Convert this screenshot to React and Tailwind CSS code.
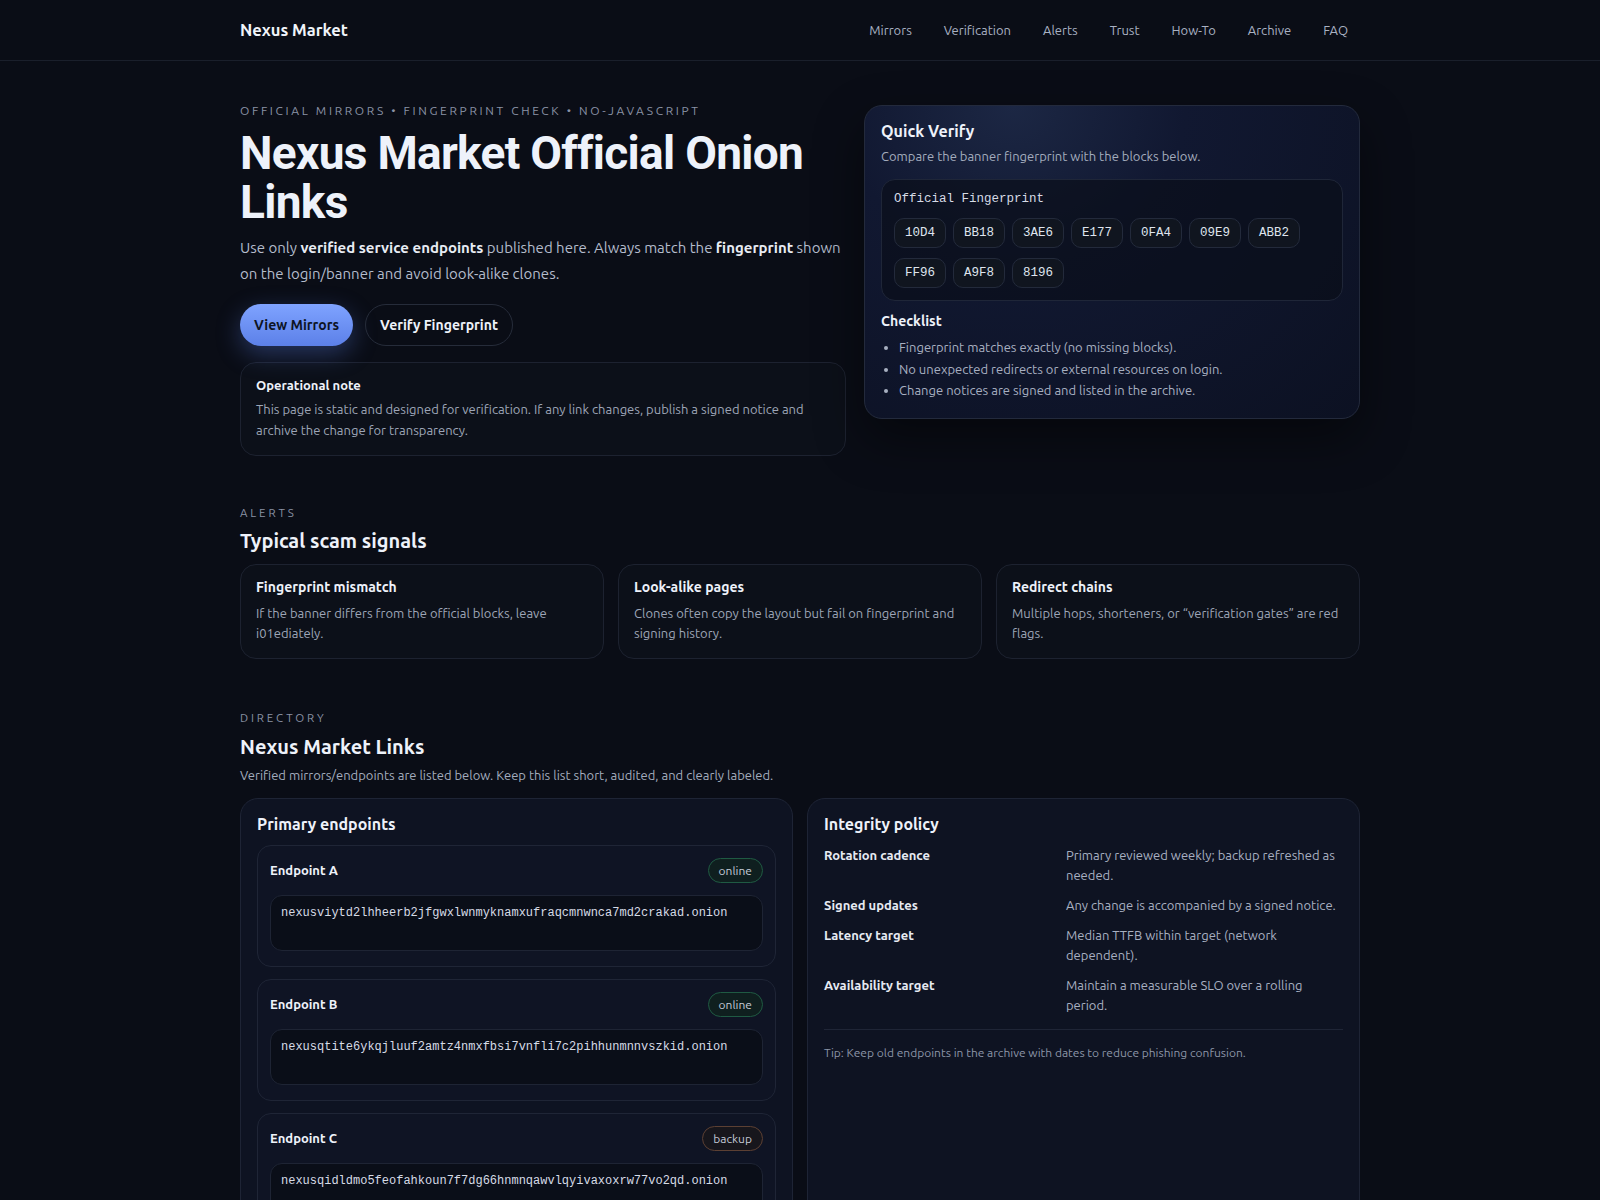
import React from "react";

const chips = ["10D4", "BB18", "3AE6", "E177", "0FA4", "09E9", "ABB2", "FF96", "A9F8", "8196"];

const endpoints = [
  { name: "Endpoint A", status: "online", addr: "nexusviytd2lhheerb2jfgwxlwnmyknamxufraqcmnwnca7md2crakad.onion" },
  { name: "Endpoint B", status: "online", addr: "nexusqtite6ykqjluuf2amtz4nmxfbsi7vnfli7c2pihhunmnnvszkid.onion" },
  { name: "Endpoint C", status: "backup", addr: "nexusqidldmo5feofahkoun7f7dg66hnmnqawvlqyivaxoxrw77vo2qd.onion" },
];

const policy = [
  ["Rotation cadence", "Primary reviewed weekly; backup refreshed as needed."],
  ["Signed updates", "Any change is accompanied by a signed notice."],
  ["Latency target", "Median TTFB within target (network dependent)."],
  ["Availability target", "Maintain a measurable SLO over a rolling period."],
];

const alerts = [
  ["Fingerprint mismatch", "If the banner differs from the official blocks, leave i01ediately."],
  ["Look-alike pages", "Clones often copy the layout but fail on fingerprint and signing history."],
  ["Redirect chains", "Multiple hops, shorteners, or \u201cverification gates\u201d are red flags."],
];

const mono = "font-['Liberation_Mono','DejaVu_Sans_Mono',monospace]";

export default function App() {
  return (
    <div className="min-h-[1200px] bg-[#0a0d16] text-[#e6eaf2] font-['Ubuntu','Noto_Sans',sans-serif]">
      <header className="border-b border-[#1a1f2b] bg-[#0a0d16]">
        <div className="mx-auto flex h-[60px] max-w-[1120px] items-center justify-between">
          <div className="text-[16.5px] font-bold text-[#f1f4fa]">Nexus Market</div>
          <nav className="flex items-center gap-2 pt-[2px] text-[13px] text-[#a9b1c2]">
            {["Mirrors", "Verification", "Alerts", "Trust", "How-To", "Archive", "FAQ"].map((l) => (
              <span key={l} className="px-3 py-1">{l}</span>
            ))}
          </nav>
        </div>
      </header>

      <main className="mx-auto max-w-[1120px]">
        <section className="grid grid-cols-[606px_1fr] gap-[18px] pt-[44px]">
          <div>
            <div className="text-[12px] leading-[12px] tracking-[0.22em] text-[#8a93a6]">OFFICIAL MIRRORS • FINGERPRINT CHECK • NO-JAVASCRIPT</div>
            <h1 className="mt-[12px] font-['Roboto','Noto_Sans',sans-serif] text-[46px] font-bold leading-[49px] tracking-[-0.015em] text-[#eef2fa]">Nexus Market Official Onion Links</h1>
            <p className="mt-[8px] text-[15px] leading-[26px] text-[#b4bccc]">
              Use only <b className="font-bold text-[#e8ecf4]">verified service endpoints</b> published here. Always match the <b className="font-bold text-[#e8ecf4]">fingerprint</b> shown on the login/banner and avoid look-alike clones.
            </p>
            <div className="mt-[17px] flex gap-3">
              <span className="flex h-[42px] items-center rounded-full bg-gradient-to-b from-[#7fa3ff] to-[#5c80e8] px-[14px] text-[14px] font-bold text-[#0d1424] shadow-[0_8px_24px_rgba(92,128,232,0.35)]">View Mirrors</span>
              <span className="flex h-[42px] items-center rounded-full border border-[#262c3a] px-[14px] text-[14px] font-bold text-[#eef2fa]">Verify Fingerprint</span>
            </div>
            <div className="mt-[16px] rounded-[16px] border border-[#1d2230] bg-[#0c1019] px-[15px] pb-[14px] pt-[12px]">
              <div className="text-[13px] font-bold leading-[20px] text-[#eef2fa]">Operational note</div>
              <p className="mt-[4px] text-[13px] leading-[21px] text-[#9ea6b7]">This page is static and designed for verification. If any link changes, publish a signed notice and archive the change for transparency.</p>
            </div>
          </div>

          <div className="self-start rounded-[18px] border border-[#232a3c] bg-[radial-gradient(ellipse_at_30%_0%,#1c2744_0%,#111831_35%,#0c1122_100%)] px-[16px] pb-[16px] pt-[13px] shadow-[0_20px_50px_rgba(0,0,0,0.45)]">
            <div className="text-[16px] font-bold leading-[24px] text-[#eef2fa]">Quick Verify</div>
            <div className="mt-[3px] text-[13px] leading-[20px] text-[#a3acbd]">Compare the banner fingerprint with the blocks below.</div>
            <div className="mt-[13px] rounded-[14px] border border-[#1f2638] bg-[#0a0e19]/70 px-[12px] pb-[12px] pt-[10px]">
              <div className={`${mono} text-[12.5px] leading-[18px] text-[#d6dbe6]`}>Official Fingerprint</div>
              <div className="mt-[10px] flex flex-wrap gap-x-[7px] gap-y-[10px]">
                {chips.map((c) => (
                  <span key={c} className={`${mono} flex h-[30px] w-[52px] items-center justify-center rounded-[10px] border border-[#232a3b] bg-[#10151f] text-[12.5px] text-[#dfe4ee]`}>{c}</span>
                ))}
              </div>
            </div>
            <div className="mt-[10px] text-[14px] font-bold leading-[20px] text-[#eef2fa]">Checklist</div>
            <ul className="mt-[6px] list-disc pl-[18px] text-[13px] leading-[21.5px] text-[#a8b0c1] marker:text-[#a8b0c1]">
              <li>Fingerprint matches exactly (no missing blocks).</li>
              <li>No unexpected redirects or external resources on login.</li>
              <li>Change notices are signed and listed in the archive.</li>
            </ul>
          </div>
        </section>

        <section className="pt-[51px]">
          <div className="text-[11.5px] leading-[12px] tracking-[0.25em] text-[#8a93a6]">ALERTS</div>
          <h2 className="mt-[8px] text-[20px] font-bold leading-[28px] text-[#eef2fa]">Typical scam signals</h2>
          <div className="mt-[9px] grid grid-cols-3 gap-[14px]">
            {alerts.map(([t, d]) => (
              <div key={t} className="rounded-[16px] border border-[#1d2230] bg-[#0c1019] px-[15px] pb-[15px] pt-[11px]">
                <div className="text-[14px] font-bold leading-[22px] text-[#eef2fa]">{t}</div>
                <p className="mt-[5px] text-[13px] leading-[20px] text-[#9ea6b7]">{d}</p>
              </div>
            ))}
          </div>
        </section>

        <section className="pt-[53px]">
          <div className="text-[11.5px] leading-[12px] tracking-[0.25em] text-[#8a93a6]">DIRECTORY</div>
          <h2 className="mt-[9px] text-[20px] font-bold leading-[28px] text-[#eef2fa]">Nexus Market Links</h2>
          <p className="mt-[4px] text-[13px] leading-[20px] text-[#a3acbd]">Verified mirrors/endpoints are listed below. Keep this list short, audited, and clearly labeled.</p>
          <div className="mt-[13px] grid grid-cols-2 items-start gap-[14px]">
            <div className="rounded-[18px] border border-[#1e2435] bg-[#0e1322] px-[16px] pb-[16px] pt-[13px]">
              <div className="text-[16px] font-bold leading-[24px] text-[#eef2fa]">Primary endpoints</div>
              <div className="mt-[9px] flex flex-col gap-[12px]">
                {endpoints.map((e) => (
                  <div key={e.name} className="rounded-[14px] border border-[#1f2536] bg-[#0f1424] px-[12px] pb-[15px] pt-[12px]">
                    <div className="flex items-center justify-between">
                      <span className="text-[13px] font-bold text-[#eef2fa]">{e.name}</span>
                      <span className={`flex h-[25px] items-center rounded-full border px-[10px] text-[12px] text-[#c3cad7] ${e.status === "online" ? "border-[#1f5a43] bg-[#0f1f1f]" : "border-[#5c4033] bg-[#17161c]"}`}>{e.status}</span>
                    </div>
                    <div className={`${mono} mt-[12px] h-[56px] rounded-[12px] border border-[#1e2434] bg-[#0a0e18] px-[10px] pt-[8px] text-[12px] leading-[18px] text-[#d6dbe6]`}>{e.addr}</div>
                  </div>
                ))}
              </div>
            </div>

            <div className="min-h-[420px] rounded-[18px] border border-[#1e2435] bg-[#0e1322] px-[16px] pb-[16px] pt-[13px]">
              <div className="text-[16px] font-bold leading-[24px] text-[#eef2fa]">Integrity policy</div>
              <div className="mt-[9px] grid grid-cols-[230px_1fr] gap-x-[12px] gap-y-[10px] text-[13px] leading-[20px]">
                {policy.map(([k, v]) => (
                  <React.Fragment key={k}>
                    <div className="font-bold text-[#e6eaf2]">{k}</div>
                    <div className="text-[#a8b0c1]">{v}</div>
                  </React.Fragment>
                ))}
              </div>
              <div className="mt-[14px] border-t border-[#1f2536] pt-[14px] text-[12px] leading-[18px] text-[#8c95a7]">Tip: Keep old endpoints in the archive with dates to reduce phishing confusion.</div>
            </div>
          </div>
        </section>
      </main>
    </div>
  );
}
